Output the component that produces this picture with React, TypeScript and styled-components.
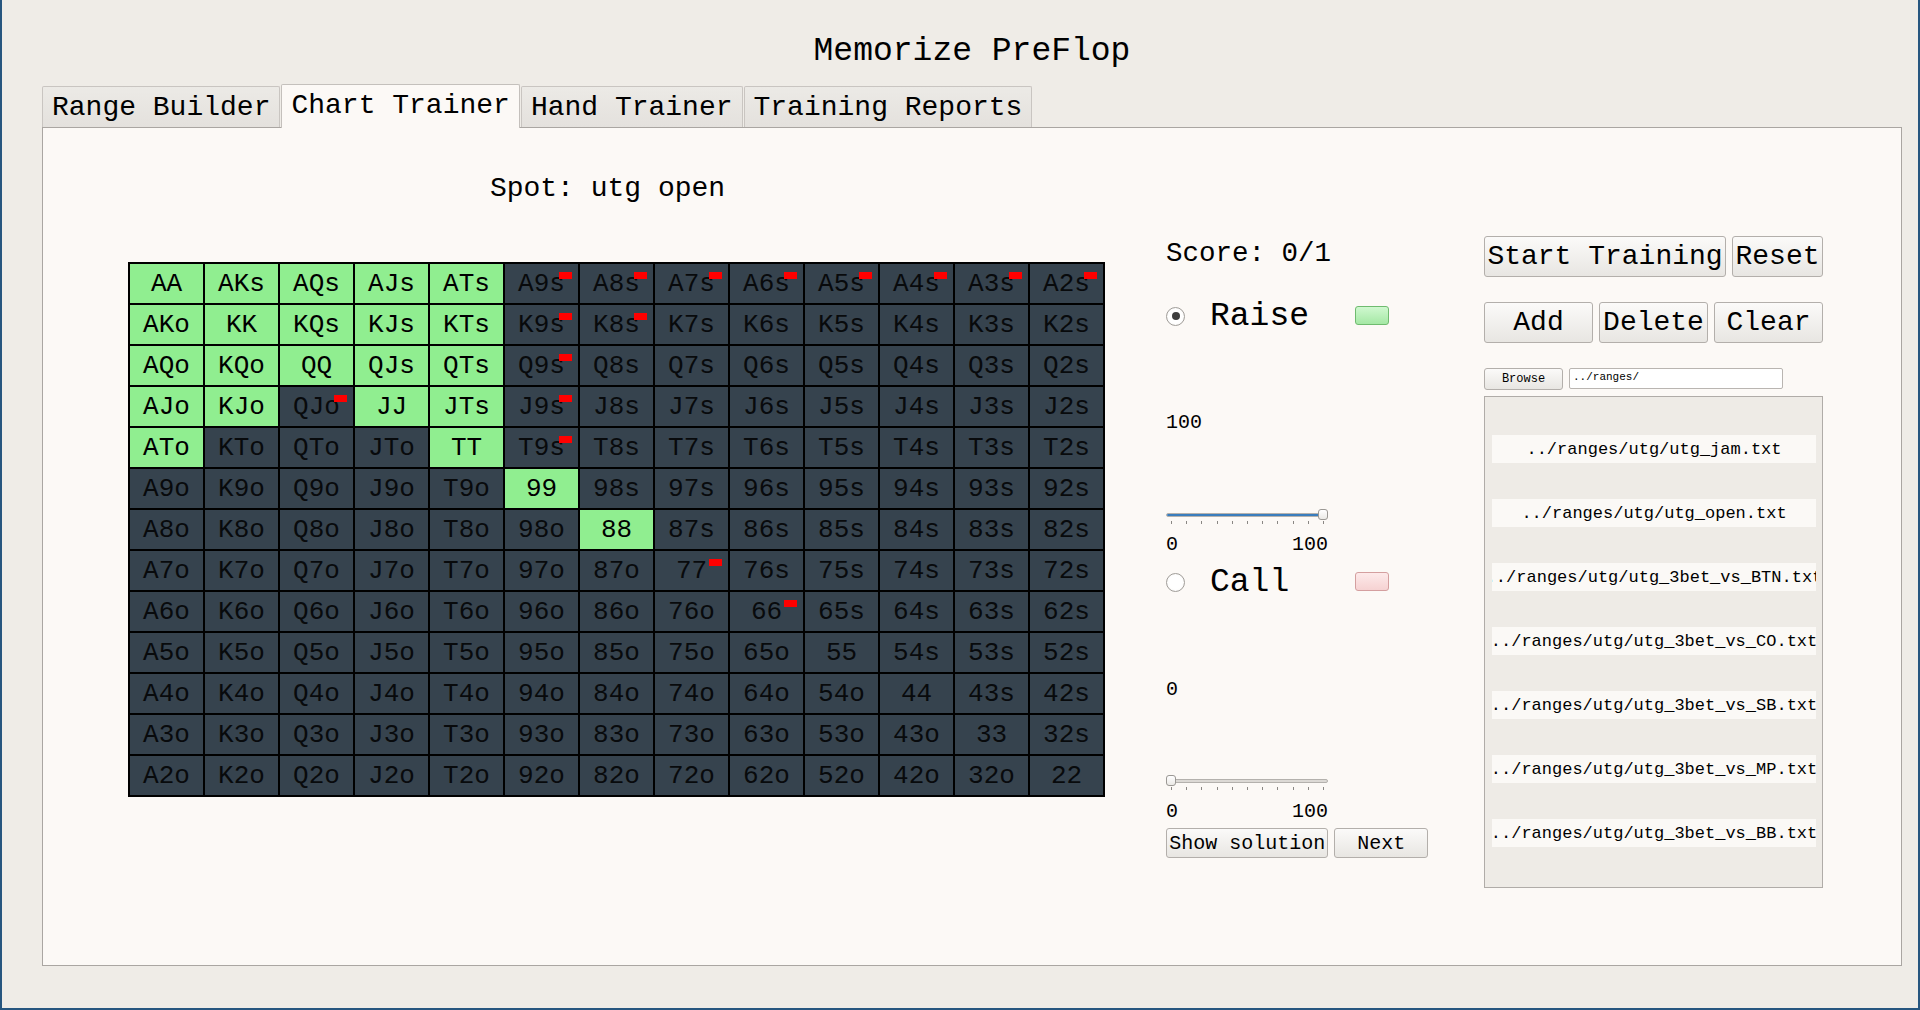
import styled, { createGlobalStyle } from "styled-components";

const RANKS = ["A", "K", "Q", "J", "T", "9", "8", "7", "6", "5", "4", "3", "2"];

const RAISE = new Set([
  "AA", "AKs", "AQs", "AJs", "ATs",
  "AKo", "KK", "KQs", "KJs", "KTs",
  "AQo", "KQo", "QQ", "QJs", "QTs",
  "AJo", "KJo", "JJ", "JTs",
  "ATo", "TT", "99", "88",
]);

// hands answered wrong in the last round
const MISSED = new Set([
  "A9s", "A8s", "A7s", "A6s", "A5s", "A4s", "A3s", "A2s",
  "K9s", "K8s", "Q9s", "QJo", "J9s", "T9s", "77", "66",
]);

const FILES = [
  "../ranges/utg/utg_jam.txt",
  "../ranges/utg/utg_open.txt",
  "../ranges/utg/utg_3bet_vs_BTN.txt",
  "../ranges/utg/utg_3bet_vs_CO.txt",
  "../ranges/utg/utg_3bet_vs_SB.txt",
  "../ranges/utg/utg_3bet_vs_MP.txt",
  "../ranges/utg/utg_3bet_vs_BB.txt",
];

const TABS = ["Range Builder", "Chart Trainer", "Hand Trainer", "Training Reports"];

const handName = (i: number, j: number) => {
  if (i === j) return RANKS[i] + RANKS[j];
  if (j > i) return RANKS[i] + RANKS[j] + "s";
  return RANKS[j] + RANKS[i] + "o";
};

const GlobalStyle = createGlobalStyle`
  html, body {
    margin: 0;
    padding: 0;
    background: #efece7;
    font-family: "Liberation Mono", "DejaVu Sans Mono", monospace;
    color: #000;
  }
  * { box-sizing: border-box; }
`;

const Window = styled.div`
  width: 1920px;
  height: 1010px;
  border: 2px solid #27567f;
  border-top: none;
  background: #efece7;
  padding: 0 16px 0 40px;
  display: flex;
  flex-direction: column;
`;

const Title = styled.h1`
  margin: 35px 0 0;
  font-size: 33px;
  line-height: 33px;
  font-weight: normal;
  text-align: center;
`;

const TabBar = styled.div`
  display: flex;
  align-items: flex-end;
  height: 43px;
  margin-top: 16px;
`;

const Tab = styled.div<{ $active?: boolean }>`
  position: relative;
  z-index: ${(p) => (p.$active ? 1 : 0)};
  height: ${(p) => (p.$active ? 44 : 41)}px;
  margin-bottom: ${(p) => (p.$active ? -1 : 0)}px;
  padding: 0 9px ${(p) => (p.$active ? 3 : 0)}px;
  display: flex;
  align-items: center;
  font-size: 28px;
  border: 1px solid ${(p) => (p.$active ? "#c4c0bc" : "#c9c5c1")};
  border-bottom: none;
  border-radius: 2px 2px 0 0;
  background: ${(p) =>
    p.$active ? "#fcf9f6" : "linear-gradient(#eceae6, #e4e1dd)"};
  & + & {
    margin-left: 1px;
  }
`;

const Panel = styled.div`
  height: 839px;
  border: 1px solid #aaa6a2;
  background: #fcf9f6;
  display: flex;
`;

const ChartColumn = styled.div`
  padding: 45px 0 0 85px;
`;

const Spot = styled.div`
  font-size: 28px;
  line-height: 32px;
  text-align: center;
  padding-right: 18px;
`;

const Grid = styled.div`
  margin-top: 57px;
  display: grid;
  grid-template-columns: repeat(13, 73px);
  grid-auto-rows: 39px;
  gap: 2px;
  padding: 2px;
  background: #000;
`;

const Cell = styled.div<{ $raise: boolean }>`
  position: relative;
  display: flex;
  align-items: center;
  justify-content: center;
  font-size: 26px;
  background: ${(p) => (p.$raise ? "#90ee90" : "#36434e")};
  color: ${(p) => (p.$raise ? "#000" : "#080a0c")};
`;

const Miss = styled.span`
  position: absolute;
  top: 8px;
  right: 6px;
  width: 13px;
  height: 7px;
  background: #ff0000;
`;

const TrainColumn = styled.div`
  width: 262px;
  margin-left: 61px;
  padding-top: 110px;
  display: flex;
  flex-direction: column;
`;

const Score = styled.div`
  font-size: 27.5px;
  line-height: 32px;
`;

const Choice = styled.div<{ $top: number }>`
  margin-top: ${(p) => p.$top}px;
  height: 40px;
  display: flex;
  align-items: center;
`;

const Radio = styled.span<{ $checked?: boolean }>`
  width: 19px;
  height: 19px;
  border-radius: 50%;
  border: 1px solid #a09d99;
  background: radial-gradient(circle, #ffffff 55%, #f1efec);
  display: flex;
  align-items: center;
  justify-content: center;
  margin-bottom: 2px;
  &::after {
    content: "";
    width: 8px;
    height: 8px;
    border-radius: 50%;
    background: ${(p) => (p.$checked ? "#3d3d3d" : "transparent")};
  }
`;

const ChoiceLabel = styled.span`
  width: 145px;
  margin-left: 25px;
  font-size: 33px;
  line-height: 40px;
`;

const Swatch = styled.span<{ $kind: "raise" | "call" }>`
  width: 34px;
  height: 19px;
  border-radius: 3px;
  margin-bottom: 3px;
  border: 1px solid ${(p) => (p.$kind === "raise" ? "#6fbb6f" : "#d49f9f")};
  background: ${(p) =>
    p.$kind === "raise"
      ? "linear-gradient(#cff8cf, #a5e8a5)"
      : "linear-gradient(#fdeaea, #f6d2d2)"};
`;

const Value = styled.div<{ $top: number }>`
  margin-top: ${(p) => p.$top}px;
  font-size: 20px;
  line-height: 24px;
`;

const SliderWrap = styled.div<{ $top: number }>`
  margin-top: ${(p) => p.$top}px;
  width: 162px;
`;

const SliderTrack = styled.div`
  position: relative;
  height: 14px;
`;

const Groove = styled.div`
  position: absolute;
  left: 0;
  right: 0;
  top: 6px;
  height: 4px;
  border-radius: 2px;
  border: 1px solid #b4b1ad;
  background: #dcd9d5;
  overflow: hidden;
`;

const GrooveFill = styled.div`
  height: 100%;
  background: #3a7dbd;
`;

const Handle = styled.div`
  position: absolute;
  top: 2px;
  width: 10px;
  height: 11px;
  border-radius: 3px;
  border: 1px solid #9b9894;
  background: linear-gradient(#ffffff, #ebe9e6);
`;

const Ticks = styled.div`
  display: flex;
  justify-content: space-between;
  padding: 0 4px 0 5px;
  height: 4px;
`;

const Tick = styled.span`
  width: 1px;
  height: 3px;
  background: #8a8784;
`;

const RangeLabels = styled.div<{ $top: number }>`
  margin-top: ${(p) => p.$top}px;
  width: 162px;
  display: flex;
  justify-content: space-between;
  font-size: 20px;
  line-height: 24px;
`;

const ButtonRow = styled.div<{ $top?: number }>`
  margin-top: ${(p) => p.$top ?? 0}px;
  display: flex;
  gap: 6px;
`;

const Button = styled.button<{ $w: number; $h: number; $size: number }>`
  width: ${(p) => p.$w}px;
  height: ${(p) => p.$h}px;
  padding: 0;
  font-family: "Liberation Mono", "DejaVu Sans Mono", monospace;
  font-size: ${(p) => p.$size}px;
  color: #000;
  white-space: nowrap;
  border: 1px solid #b3afab;
  border-radius: 3px;
  background: linear-gradient(#fbfaf9, #e8e6e2);
`;

const FileColumn = styled.div`
  width: 339px;
  margin-left: 56px;
  padding-top: 108px;
  display: flex;
  flex-direction: column;
`;

const PathInput = styled.div`
  width: 214px;
  height: 21px;
  border: 1px solid #b9b5b1;
  border-radius: 2px;
  background: #ffffff;
  font-size: 11px;
  padding: 2px 3px;
`;

const FileList = styled.div`
  margin-top: 6px;
  height: 492px;
  border: 1px solid #b0aca8;
  background: #eeebe6;
  padding: 38px 6px 0 7px;
  display: flex;
  flex-direction: column;
  gap: 36px;
`;

const FileItem = styled.div`
  height: 28px;
  display: flex;
  justify-content: center;
  align-items: center;
  overflow: hidden;
  background: #fbf9f6;
  font-size: 17px;
  white-space: nowrap;
  & > span {
    flex-shrink: 0;
  }
`;

const Slider = ({ value, top }: { value: number; top: number }) => (
  <SliderWrap $top={top}>
    <SliderTrack>
      <Groove>
        <GrooveFill style={{ width: `${value}%` }} />
      </Groove>
      <Handle style={{ left: `calc(${value}% - ${(value / 100) * 10}px)` }} />
    </SliderTrack>
    <Ticks>
      {Array.from({ length: 11 }, (_, k) => (
        <Tick key={k} />
      ))}
    </Ticks>
  </SliderWrap>
);

export default function App() {
  return (
    <>
      <GlobalStyle />
      <Window>
        <Title>Memorize PreFlop</Title>
        <TabBar>
          {TABS.map((t) => (
            <Tab key={t} $active={t === "Chart Trainer"}>
              {t}
            </Tab>
          ))}
        </TabBar>
        <Panel>
          <ChartColumn>
            <Spot>Spot: utg open</Spot>
            <Grid>
              {RANKS.map((_, i) =>
                RANKS.map((__, j) => {
                  const hand = handName(i, j);
                  return (
                    <Cell key={hand} $raise={RAISE.has(hand)}>
                      {hand}
                      {MISSED.has(hand) && <Miss />}
                    </Cell>
                  );
                })
              )}
            </Grid>
          </ChartColumn>

          <TrainColumn>
            <Score>Score: 0/1</Score>
            <Choice $top={27}>
              <Radio $checked />
              <ChoiceLabel>Raise</ChoiceLabel>
              <Swatch $kind="raise" />
            </Choice>
            <Value $top={74}>100</Value>
            <Slider value={100} top={72} />
            <RangeLabels $top={8}>
              <span>0</span>
              <span>100</span>
            </RangeLabels>
            <Choice $top={6}>
              <Radio />
              <ChoiceLabel>Call</ChoiceLabel>
              <Swatch $kind="call" />
            </Choice>
            <Value $top={75}>0</Value>
            <Slider value={0} top={71} />
            <RangeLabels $top={9}>
              <span>0</span>
              <span>100</span>
            </RangeLabels>
            <ButtonRow $top={4}>
              <Button $w={163} $h={30} $size={20}>
                Show solution
              </Button>
              <Button $w={94} $h={30} $size={20}>
                Next
              </Button>
            </ButtonRow>
          </TrainColumn>

          <FileColumn>
            <ButtonRow>
              <Button $w={242} $h={41} $size={28}>
                Start Training
              </Button>
              <Button $w={91} $h={41} $size={28}>
                Reset
              </Button>
            </ButtonRow>
            <ButtonRow $top={25}>
              <Button $w={109} $h={41} $size={28}>
                Add
              </Button>
              <Button $w={109} $h={41} $size={28}>
                Delete
              </Button>
              <Button $w={109} $h={41} $size={28}>
                Clear
              </Button>
            </ButtonRow>
            <ButtonRow $top={25}>
              <Button $w={79} $h={22} $size={12}>
                Browse
              </Button>
              <PathInput>../ranges/</PathInput>
            </ButtonRow>
            <FileList>
              {FILES.map((f) => (
                <FileItem key={f}>
                  <span>{f}</span>
                </FileItem>
              ))}
            </FileList>
          </FileColumn>
        </Panel>
      </Window>
    </>
  );
}
